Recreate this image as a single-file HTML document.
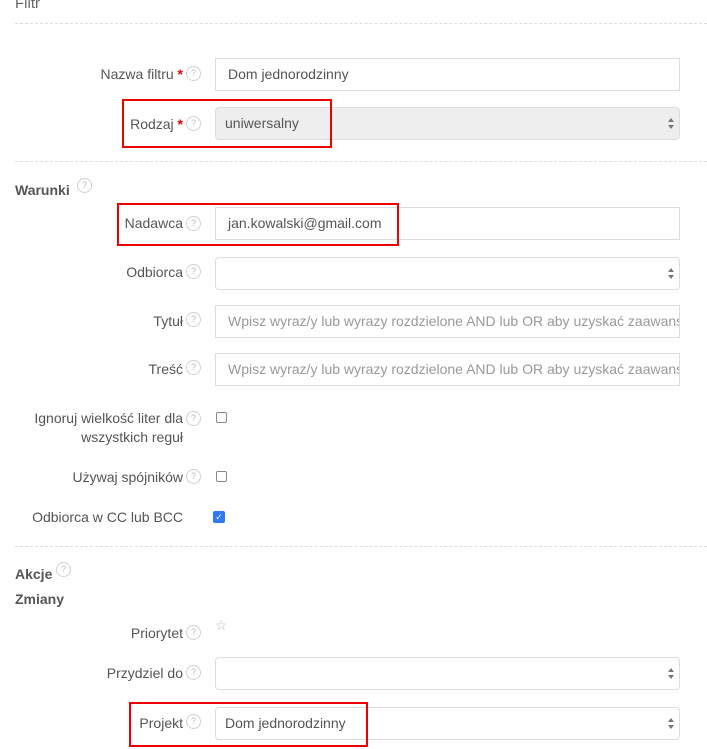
<!DOCTYPE html>
<html><head><meta charset="utf-8"><style>
body{margin:0;width:707px;height:749px;background:#fff;position:relative;overflow:hidden;font-family:"Liberation Sans",sans-serif;color:#555;font-size:14px}
.a{position:absolute}
.dash{position:absolute;left:15px;right:0;border-top:1px dashed #ddd;height:0}
.lbl{position:absolute;right:524px;text-align:right;white-space:nowrap;line-height:20px}
.req{color:#e00;font-weight:bold}
.h{position:absolute;width:13px;height:13px;border:1px solid #d0d0d0;border-radius:50%;font-size:9px;color:#bbb;text-align:center;line-height:13px}
.in{position:absolute;left:215px;height:31px;border:1px solid #ddd;box-sizing:content-box;line-height:31px;padding-left:12px;width:451px;color:#555;white-space:nowrap;overflow:hidden}
.sel{border-radius:4px}
.sel:after{content:"";position:absolute;right:5px;top:10px;border:3.5px solid transparent;border-bottom:4px solid #777;border-top:0}
.sel:before{content:"";position:absolute;right:5px;top:17px;border:3.5px solid transparent;border-top:4px solid #777;border-bottom:0}
.ph{color:#999}
.cb{position:absolute;left:216px;width:9px;height:9px;border:1px solid #888;border-radius:2px}
.red{position:absolute;border:2px solid #e00}
.b{font-weight:bold;color:#555}
</style></head><body>
<div class="a" style="left:15px;top:-5px;font-size:15px;color:#666">Filtr</div>
<div class="dash" style="top:23px"></div>

<div class="lbl" style="top:64px">Nazwa filtru <span class="req">*</span></div><div class="h" style="left:186px;top:66px">?</div>
<div class="in" style="top:58px">Dom jednorodzinny</div>

<div class="lbl" style="top:114px">Rodzaj <span class="req">*</span></div><div class="h" style="left:186px;top:116px">?</div>
<div class="in sel" style="top:107px;background:#eee;padding-left:9px;width:454px">uniwersalny</div>
<div class="red" style="left:122px;top:99px;width:206px;height:45px"></div>

<div class="dash" style="top:161px"></div>
<div class="a b" style="left:15px;top:182px">Warunki</div><div class="h" style="left:77px;top:178px">?</div>

<div class="lbl" style="top:213px">Nadawca</div><div class="h" style="left:186px;top:216px">?</div>
<div class="in" style="top:207px">jan.kowalski@gmail.com</div>
<div class="red" style="left:117px;top:203px;width:278px;height:39px"></div>

<div class="lbl" style="top:262px">Odbiorca</div><div class="h" style="left:186px;top:264px">?</div>
<div class="in sel" style="top:257px"></div>

<div class="lbl" style="top:311px">Tytuł</div><div class="h" style="left:186px;top:312px">?</div>
<div class="in ph" style="top:305px">Wpisz wyraz/y lub wyrazy rozdzielone AND lub OR aby uzyskać zaawansowane</div>

<div class="lbl" style="top:359px">Treść</div><div class="h" style="left:186px;top:360px">?</div>
<div class="in ph" style="top:353px">Wpisz wyraz/y lub wyrazy rozdzielone AND lub OR aby uzyskać zaawansowane</div>

<div class="lbl" style="top:409px;line-height:19px">Ignoruj wielkość liter dla<br>wszystkich reguł</div><div class="h" style="left:186px;top:411px">?</div>
<div class="cb" style="top:412px"></div>

<div class="lbl" style="top:467px">Używaj spójników</div><div class="h" style="left:186px;top:469px">?</div>
<div class="cb" style="top:471px"></div>

<div class="lbl" style="top:507px">Odbiorca w CC lub BCC</div>
<div class="a" style="left:213px;top:511px;width:12px;height:12px;background:#2f7bf5;border-radius:2px;color:#fff;font-size:9px;line-height:12px;text-align:center">✓</div>

<div class="dash" style="top:546px"></div>
<div class="a b" style="left:15px;top:566px">Akcje</div><div class="h" style="left:56px;top:562px">?</div>
<div class="a b" style="left:15px;top:591px">Zmiany</div>

<div class="lbl" style="top:623px">Priorytet</div><div class="h" style="left:186px;top:625px">?</div>
<div class="a" style="left:215px;top:617px;color:#bbb;font-size:14px">☆</div>

<div class="lbl" style="top:663px">Przydziel do</div><div class="h" style="left:186px;top:665px">?</div>
<div class="in sel" style="top:657px"></div>

<div class="lbl" style="top:713px">Projekt</div><div class="h" style="left:186px;top:714px">?</div>
<div class="in sel" style="top:707px;padding-left:9px;width:454px">Dom jednorodzinny</div>
<div class="red" style="left:129px;top:702px;width:235px;height:41px"></div>
</body></html>
